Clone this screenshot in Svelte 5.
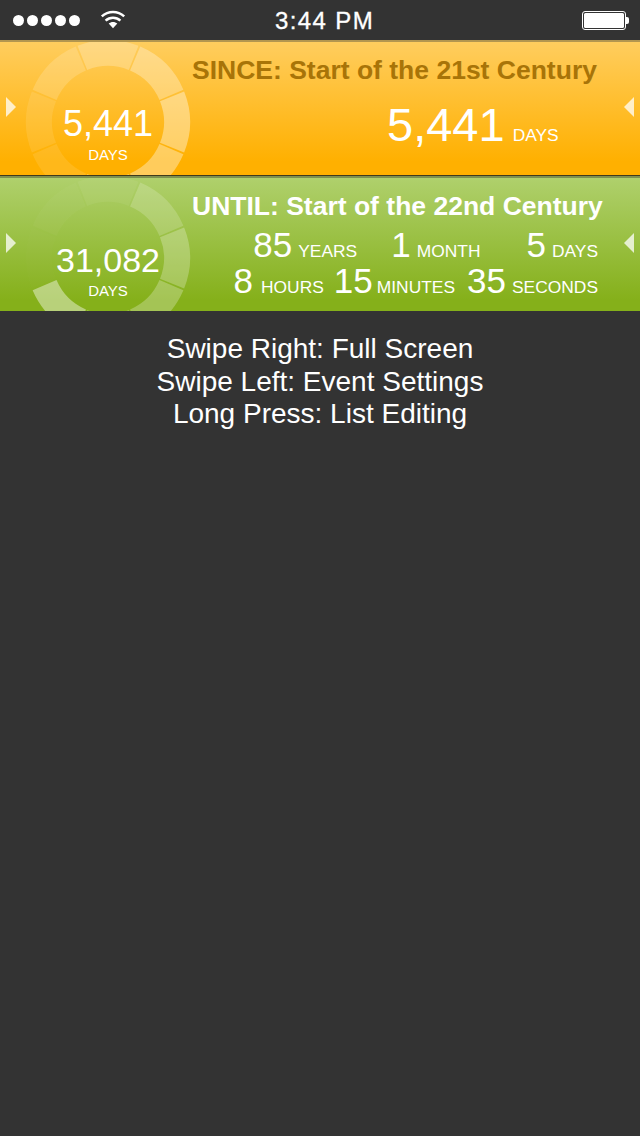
<script>
  const C = 108, R = 82, r = 56;
  function seg(i) {
    const a0 = (-112.5 + i * 45) * Math.PI / 180 + 0.012;
    const a1 = (-67.5 + i * 45) * Math.PI / 180 - 0.012;
    const p = (rad, a) => `${(C + rad * Math.cos(a)).toFixed(2)} ${(C + rad * Math.sin(a)).toFixed(2)}`;
    return `M${p(R, a0)}A${R} ${R} 0 0 1 ${p(R, a1)}L${p(r, a1)}A${r} ${r} 0 0 0 ${p(r, a0)}Z`;
  }
  const segments = [0, 1, 2, 3, 4, 5, 6, 7].map(seg);
  const since = [0.24, 0.3, 0.38, 0.36, 0.3, 0.1, 0.1, 0.17];
  const until = [0.06, 0.18, 0.25, 0.26, 0.2, 0.42, 0.01, 0.03];
  const top = [[85, 'YEARS'], [1, 'MONTH'], [5, 'DAYS']];
  const bottom = [[8, 'HOURS'], [15, 'MINUTES'], [35, 'SECONDS']];
</script>

{#snippet gauge(ops, value)}
  <div class="gauge">
    <svg class="ring" width="216" height="216" viewBox="0 0 216 216" aria-hidden="true">
      {#each segments as d, i}
        <path {d} fill="#fff" fill-opacity={ops[i]} />
      {/each}
    </svg>
    <div class="gauge-text">
      <div class="gauge-value">{value}</div>
      <div class="gauge-unit">DAYS</div>
    </div>
  </div>
{/snippet}

{#snippet arrows()}
  <svg class="arrow left" width="10" height="20" viewBox="0 0 10 20" aria-hidden="true"><path d="M0 0L10 10L0 20Z" /></svg>
  <svg class="arrow right" width="10" height="20" viewBox="0 0 10 20" aria-hidden="true"><path d="M10 0L0 10L10 20Z" /></svg>
{/snippet}

<div class="screen">
  <header class="status">
    <div class="status-left">
      <div class="dots"><i></i><i></i><i></i><i></i><i></i></div>
      <svg class="wifi" width="26" height="20" viewBox="0 0 26 20" aria-hidden="true">
        <path d="M13 18.2L8.7 13.6C11 11.5 15 11.5 17.3 13.6Z" fill="#fff" />
        <path d="M5.6 10.6C9.8 6.8 16.2 6.8 20.4 10.6" fill="none" stroke="#fff" stroke-width="2.5" />
        <path d="M1.8 6.4C8.2 0.6 17.8 0.6 24.2 6.4" fill="none" stroke="#fff" stroke-width="2.5" />
      </svg>
    </div>
    <div class="time">3:44 PM</div>
    <div class="battery"><span class="cell"><span class="fill"></span></span><span class="nub"></span></div>
  </header>

  <section class="card since">
    {@render arrows()}
    {@render gauge(since, '5,441')}
    <div class="info">
      <h2 class="dark">SINCE: Start of the 21st Century</h2>
      <div class="big"><span class="big-num">5,441</span><span class="unit">DAYS</span></div>
    </div>
  </section>

  <section class="card until">
    {@render arrows()}
    {@render gauge(until, '31,082')}
    <div class="info">
      <h2>UNTIL: Start of the 22nd Century</h2>
      <div class="row r1">
        {#each top as [n, u]}
          <span class="cellv"><span class="num">{n}</span><span class="unit">{u}</span></span>
        {/each}
      </div>
      <div class="row r2">
        {#each bottom as [n, u]}
          <span class="cellv"><span class="num">{n}</span><span class="unit">{u}</span></span>
        {/each}
      </div>
    </div>
  </section>

  <p class="help">Swipe Right: Full Screen<br />Swipe Left: Event Settings<br />Long Press: List Editing</p>
</div>

<style>
  :global(body) { margin: 0; background: #333; }
  .screen {
    width: 640px; height: 1136px; background: #333; overflow: hidden;
    font-family: "Liberation Sans", Arial, sans-serif; color: #fff;
  }
  .status { height: 40px; display: flex; align-items: center; position: relative; }
  .status-left { display: flex; align-items: center; padding-left: 13px; gap: 20px; }
  .dots { display: flex; gap: 3px; }
  .dots i { width: 11px; height: 11px; border-radius: 50%; background: #fff; display: block; }
  .time {
    position: absolute; left: 0; right: 0; top: 7px; text-align: center;
    font-size: 24px; line-height: 28px; letter-spacing: 1.4px; padding-left: 9px;
    -webkit-text-stroke: 0.3px #fff;
  }
  .battery { margin-left: auto; margin-right: 11px; display: flex; align-items: center; margin-top: 1px; }
  .cell { width: 40px; height: 15px; border: 1px solid #fff; border-radius: 3px; padding: 1px; display: block; }
  .fill { display: block; width: 100%; height: 100%; background: #fff; border-radius: 1.5px; }
  .nub { width: 3px; height: 7px; background: #fff; border-radius: 0 2px 2px 0; }

  .card { position: relative; overflow: hidden; display: flex; box-sizing: border-box; }
  .since {
    height: 136px; border-top: 2px solid #b3964f; border-bottom: 1px solid #3f3a1c;
    background: linear-gradient(#ffcd5e, #ffb000 90%);
  }
  .until {
    height: 135px; border-top: 2px solid #7d9150;
    background: linear-gradient(#afd06c, #85b01a 92%);
  }
  .gauge { width: 192px; flex: none; position: relative; }
  .ring { position: absolute; left: 0; top: -28px; }
  .gauge-text { position: absolute; left: 52px; width: 112px; top: 61px; text-align: center; }
  .gauge-value { font-size: 36px; line-height: 42px; }
  .until .gauge-value { font-size: 34px; }
  .gauge-unit { font-size: 15px; line-height: 18px; margin-top: 1px; }

  .arrow { position: absolute; fill: #fff; fill-opacity: 0.75; top: 55px; }
  .arrow.left { left: 6px; }
  .arrow.right { right: 6px; }

  .info { flex: 1; min-width: 0; }
  h2 { margin: 0; padding-top: 13px; font-size: 26.5px; line-height: 30px; font-weight: 700; white-space: nowrap; }
  h2.dark { color: #a87408; }
  .big { margin-top: 15px; padding-left: 195px; display: flex; align-items: baseline; white-space: nowrap; }
  .big-num { font-size: 47px; line-height: 50px; }
  .unit { font-size: 17.4px; margin-left: 8px; }
  .row { display: flex; justify-content: flex-end; padding-right: 42px; white-space: nowrap; }
  .row .num { font-size: 35px; line-height: 36px; }
  .row .unit { margin-left: 6px; }
  .r1 { margin-top: 6px; }
  .cellv { display: inline-flex; align-items: baseline; }
  .r1 .cellv:nth-child(2) { margin-left: 34px; }
  .r1 .cellv:nth-child(3) { margin-left: 46px; }
  .r2 .cellv:nth-child(1) .unit { margin-left: 8px; }
  .r2 .cellv:nth-child(2) { margin-left: 10px; }
  .r2 .cellv:nth-child(3) { margin-left: 12px; }
  .r2 .cellv:nth-child(2) .unit { margin-left: 4px; }

  .help { margin: 22px 0 0; text-align: center; font-size: 28px; line-height: 32.5px; }
</style>
